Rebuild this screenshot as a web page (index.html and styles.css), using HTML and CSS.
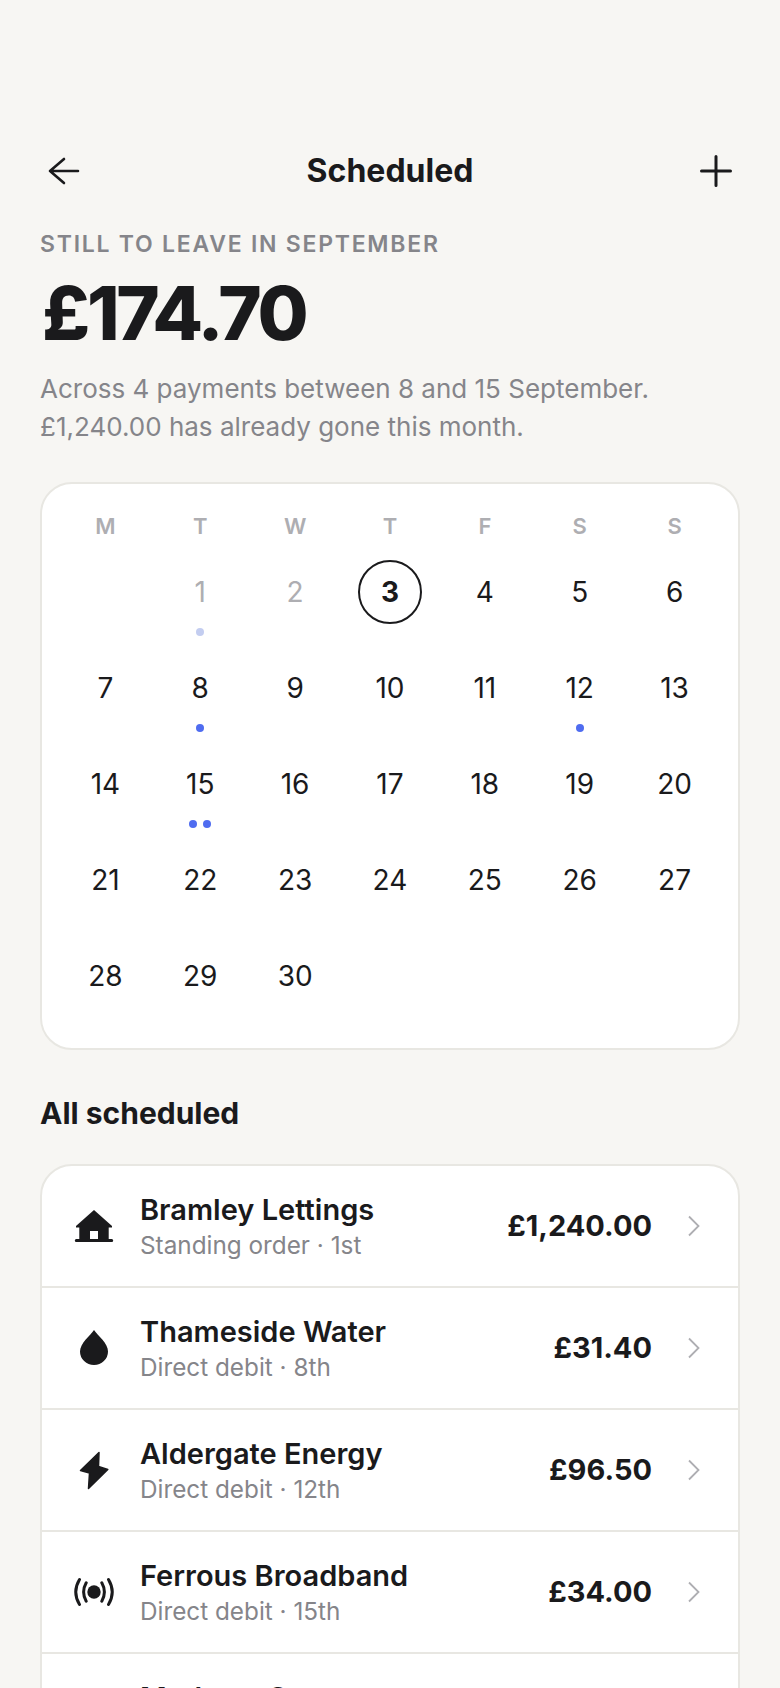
FILE: index.html
```html
<!DOCTYPE html>
<html lang="en">
<head>
<meta charset="utf-8">
<title>Scheduled</title>
<link rel="stylesheet" href="styles.css">
</head>
<body>
<main class="screen">
  <header class="nav">
    <svg class="nav-icon nav-back" viewBox="0 0 32 32"><path d="M30 16H2M16 4 2 16l14 12"/></svg>
    <h1 class="nav-title">Scheduled</h1>
    <svg class="nav-icon nav-add" viewBox="0 0 32 32"><path d="M16 1.500v29M1.500 16h29"/></svg>
  </header>
  <section class="summary">
    <p class="eyebrow">STILL TO LEAVE IN SEPTEMBER</p>
    <p class="total">£174.70</p>
    <p class="note">Across 4 payments between 8 and 15 September.<br>£1,240.00 has already gone this month.</p>
  </section>
  <section class="card calendar">
    <div class="week"><span>M</span><span>T</span><span>W</span><span>T</span><span>F</span><span>S</span><span>S</span></div>
    <div class="days">
      <div class="day"></div>
      <div class="day past"><span class="num">1</span><span class="dots"><i class="dot"></i></span></div>
      <div class="day past"><span class="num">2</span></div>
      <div class="day today"><span class="num">3</span></div>
      <div class="day"><span class="num">4</span></div>
      <div class="day"><span class="num">5</span></div>
      <div class="day"><span class="num">6</span></div>
      <div class="day"><span class="num">7</span></div>
      <div class="day"><span class="num">8</span><span class="dots"><i class="dot"></i></span></div>
      <div class="day"><span class="num">9</span></div>
      <div class="day"><span class="num">10</span></div>
      <div class="day"><span class="num">11</span></div>
      <div class="day"><span class="num">12</span><span class="dots"><i class="dot"></i></span></div>
      <div class="day"><span class="num">13</span></div>
      <div class="day"><span class="num">14</span></div>
      <div class="day"><span class="num">15</span><span class="dots"><i class="dot"></i><i class="dot"></i></span></div>
      <div class="day"><span class="num">16</span></div>
      <div class="day"><span class="num">17</span></div>
      <div class="day"><span class="num">18</span></div>
      <div class="day"><span class="num">19</span></div>
      <div class="day"><span class="num">20</span></div>
      <div class="day"><span class="num">21</span></div>
      <div class="day"><span class="num">22</span></div>
      <div class="day"><span class="num">23</span></div>
      <div class="day"><span class="num">24</span></div>
      <div class="day"><span class="num">25</span></div>
      <div class="day"><span class="num">26</span></div>
      <div class="day"><span class="num">27</span></div>
      <div class="day"><span class="num">28</span></div>
      <div class="day"><span class="num">29</span></div>
      <div class="day"><span class="num">30</span></div>
    </div>
  </section>
  <h2 class="section-title">All scheduled</h2>
  <section class="card list">
    <div class="row">
      <svg class="row-icon" viewBox="0 0 40 40"><path fill-rule="evenodd" d="M20 4 38 20v1.500h-3.300V33h3a1.500 1.500 0 0 1 0 3H2.300a1.500 1.500 0 0 1 0-3h3V21.500H2V20zM16 25v8h8v-8z"/></svg>
      <div class="row-text"><div class="row-name">Bramley Lettings</div><div class="row-sub">Standing order · 1st</div></div>
      <div class="row-amount">£1,240.00</div>
      <svg class="chev" viewBox="0 0 12 22"><path d="M1 1.500 10.500 11 1 20.500"/></svg>
    </div>
    <div class="row">
      <svg class="row-icon" viewBox="0 0 40 40"><path d="M20 2C24 8 34 15 34 23.500A14 13.500 0 0 1 6 23.500C6 15 16 8 20 2Z"/></svg>
      <div class="row-text"><div class="row-name">Thameside Water</div><div class="row-sub">Direct debit · 8th</div></div>
      <div class="row-amount">£31.40</div>
      <svg class="chev" viewBox="0 0 12 22"><path d="M1 1.500 10.500 11 1 20.500"/></svg>
    </div>
    <div class="row">
      <svg class="row-icon" viewBox="0 0 40 40"><path class="bolt" d="M25 2.500 6.500 20.500 15.500 23 14.500 38.500 33.800 19.500 24.500 16.500Z"/></svg>
      <div class="row-text"><div class="row-name">Aldergate Energy</div><div class="row-sub">Direct debit · 12th</div></div>
      <div class="row-amount">£96.50</div>
      <svg class="chev" viewBox="0 0 12 22"><path d="M1 1.500 10.500 11 1 20.500"/></svg>
    </div>
    <div class="row">
      <svg class="row-icon" viewBox="0 0 40 40"><circle cx="20" cy="20" r="6.700"/><path class="wave" d="M5.500 7.500Q-2 20 5.500 32.500M12.200 10.800Q7 20 12.200 29.200M34.500 7.500Q42 20 34.500 32.500M27.800 10.800Q33 20 27.800 29.200"/></svg>
      <div class="row-text"><div class="row-name">Ferrous Broadband</div><div class="row-sub">Direct debit · 15th</div></div>
      <div class="row-amount">£34.00</div>
      <svg class="chev" viewBox="0 0 12 22"><path d="M1 1.500 10.500 11 1 20.500"/></svg>
    </div>
    <div class="row">
      <svg class="row-icon" viewBox="0 0 40 40"><path d="M4 14h5v12H4zM11 10h5v20h-5zM16 18h8v4h-8zM24 10h5v20h-5zM31 14h5v12h-5z"/></svg>
      <div class="row-text"><div class="row-name">Medway Gym</div><div class="row-sub">Direct debit · 15th</div></div>
      <div class="row-amount">£12.80</div>
      <svg class="chev" viewBox="0 0 12 22"><path d="M1 1.500 10.500 11 1 20.500"/></svg>
    </div>
  </section>
</main>
</body>
</html>
```
FILE: styles.css
```css
* { box-sizing: border-box; }
html, body { margin: 0; height: 1688px; overflow: hidden; }
body { background: #f7f6f3; color: #1a1a1c; font-family: Inter, "Liberation Sans", sans-serif; }
p, h1, h2 { margin: 0; }
.screen { padding: 151px 40px 0; }
.nav { display: grid; grid-template-columns: 1fr auto 1fr; align-items: center; height: 40px; }
.nav-icon { width: 32px; height: 32px; fill: none; stroke: #1a1a1c; stroke-width: 2.600; stroke-linecap: round; stroke-linejoin: round; }
.nav-back { margin-left: 8px; }
.nav-add { justify-self: end; margin-right: 8px; stroke-width: 3; }
.nav-title { font-size: 32px; font-weight: 700; line-height: 40px; }
.summary { margin-top: 40px; }
.eyebrow { font-size: 23px; line-height: 26px; font-weight: 600; letter-spacing: 1.750px; color: #85858a; }
.total { margin-top: 16px; margin-left: 2px; font-size: 74px; line-height: 80px; font-weight: 800; letter-spacing: -3.200px; }
.note { margin-top: 17px; font-size: 26px; line-height: 38px; color: #85858a; }
.card { background: #fff; border: 2px solid #e8e7e2; border-radius: 32px; }
.calendar { margin-top: 36px; padding: 26px 16px 20px; height: 568px; }
.week { display: grid; grid-template-columns: repeat(7, 1fr); text-align: center; font-size: 22px; line-height: 32px; font-weight: 600; color: #aeaeb2; }
.days { display: grid; grid-template-columns: repeat(7, 1fr); grid-auto-rows: 96px; margin-top: 18px; }
.day { display: flex; flex-direction: column; align-items: center; font-size: 28px; }
.num { display: flex; align-items: center; justify-content: center; width: 64px; height: 64px; flex: none; }
.past .num { color: #aeaeb2; }
.today .num { border: 2px solid #1a1a1c; border-radius: 50%; font-weight: 700; }
.dots { display: flex; gap: 6px; margin-top: 4px; }
.dot { width: 8px; height: 8px; border-radius: 50%; background: #4f6cf0; }
.past .dot { background: #c3cdf0; }
.section-title { margin-top: 43px; font-size: 30px; line-height: 40px; font-weight: 700; }
.list { margin-top: 31px; height: 700px; }
.row { display: flex; align-items: center; height: 122px; padding: 0 38px 0 32px; border-bottom: 2px solid #e8e7e2; }
.row-icon { width: 40px; height: 40px; flex: none; fill: #1a1a1c; }
.bolt { stroke: #1a1a1c; stroke-width: 1.500; stroke-linejoin: round; }
.wave { fill: none; stroke: #1a1a1c; stroke-width: 3; stroke-linecap: round; }
.row-text { flex: 1; margin-left: 26px; padding-top: 2px; }
.row-name { font-size: 29px; line-height: 36px; font-weight: 600; }
.row-sub { font-size: 24.300px; line-height: 35px; color: #85858a; }
.row-amount { font-size: 29px; font-weight: 700; padding-bottom: 2px; }
.chev { width: 12px; height: 22px; margin-left: 36px; flex: none; fill: none; stroke: #aeaeb2; stroke-width: 1.800; }
```
